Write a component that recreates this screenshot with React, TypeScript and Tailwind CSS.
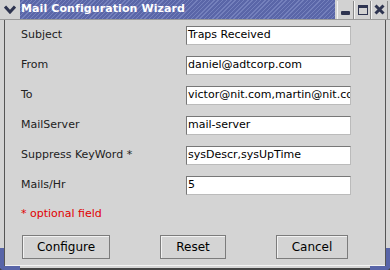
import React from "react";

interface Field {
  label: string;
  value: string;
}

const fields: Field[] = [
  { label: "Subject", value: "Traps Received" },
  { label: "From", value: "daniel@adtcorp.com" },
  { label: "To", value: "victor@nit.com,martin@nit.com" },
  { label: "MailServer", value: "mail-server" },
  { label: "Suppress KeyWord *", value: "sysDescr,sysUpTime" },
  { label: "Mails/Hr", value: "5" },
];

function TitleButton({ children }: { children: React.ReactNode }) {
  return (
    <div className="w-[17px] h-[18px] flex items-center justify-center bg-[#d2d2d2] border-l border-[#f4f4f4] border-r border-r-[#8a8a8a]">
      {children}
    </div>
  );
}

function Button({ label, w }: { label: string; w: string }) {
  return (
    <div
      className={`${w} h-[24px] flex items-center justify-center border border-[#7c7c7c] shadow-[inset_1px_1px_0_#f2f2f2] text-[12px] text-black`}
    >
      {label}
    </div>
  );
}

export default function App() {
  return (
    <div
      className="w-[390px] h-[270px] bg-[#d4d4d4] flex flex-col overflow-hidden"
      style={{ fontFamily: '"DejaVu Sans", Verdana, sans-serif' }}
    >
      {/* title bar */}
      <div className="h-[20px] flex items-stretch bg-[#d2d2d2] border-b border-[#9a9a9a]">
        <div className="w-[20px] flex items-center justify-center">
          <svg width="12" height="9" viewBox="0 0 12 9">
            <path d="M1 1.5 L6 7 L11 1.5" stroke="#2e3450" strokeWidth="3" fill="none" />
          </svg>
        </div>
        <div className="flex-1 flex items-center pl-[1px] bg-[#5b68aa] bg-[repeating-linear-gradient(135deg,#5a66a8_0px,#5a66a8_2px,#7480bc_2px,#7480bc_3px)]">
          <span className="text-white font-bold text-[11px] tracking-[0.1px]">
            Mail Configuration Wizard
          </span>
        </div>
        <div className="flex items-center pl-[2px] pr-[2px]">
          <TitleButton>
            <div className="w-[9px] h-[4px] bg-[#2e3450] mt-[6px] rounded-[1px]" />
          </TitleButton>
          <TitleButton>
            <div className="w-[10px] h-[10px] border border-[#2e3450] border-t-[3px]" />
          </TitleButton>
          <TitleButton>
            <svg width="11" height="11" viewBox="0 0 11 11">
              <path d="M1.5 1.5 L9.5 9.5 M9.5 1.5 L1.5 9.5" stroke="#2e3450" strokeWidth="3" />
            </svg>
          </TitleButton>
        </div>
      </div>

      {/* body */}
      <div className="flex-1 flex flex-col mx-[4px] border-l border-r border-[#555] relative">
        <div className="flex-1 flex flex-col pl-[16px] pr-[34px]">
          {fields.map((f) => (
            <div key={f.label} className="h-[30px] flex items-center">
              <div className="w-[165px] text-[11px] text-[#222]">{f.label}</div>
              <div className="flex-1 h-[19px] bg-white border border-[#777] border-r-[#bbb] border-b-[#bbb] flex items-center pl-[1px] overflow-hidden whitespace-nowrap text-[11px] text-black">
                {f.value}
              </div>
            </div>
          ))}
          <div className="text-[11px] text-[#e00000] mt-[6px]">* optional field</div>
          <div className="flex mt-[12px] pl-[1px]">
            <Button label="Configure" w="w-[88px]" />
            <div className="w-[50px]" />
            <Button label="Reset" w="w-[66px]" />
            <div className="w-[50px]" />
            <Button label="Cancel" w="w-[72px]" />
          </div>
        </div>
        <div className="h-[3px] border-t border-[#f4f4f4]" />
        <div className="absolute left-[-5px] bottom-[-2px] w-[20px] h-[22px] border-l-[4px] border-b-[4px] border-[#5865a8] rounded-bl-[4px]" />
        <div className="absolute right-[-5px] bottom-[-2px] w-[20px] h-[22px] border-r-[4px] border-b-[4px] border-[#5865a8] rounded-br-[4px]" />
      </div>
      <div className="h-[2px] bg-[#444]" />
    </div>
  );
}
